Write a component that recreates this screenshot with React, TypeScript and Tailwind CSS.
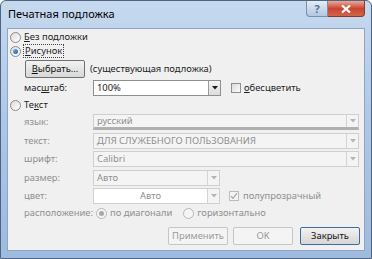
import React from "react";

const font = { fontFamily: '"Noto Sans", "Open Sans", sans-serif' };

const Radio = ({ checked, disabled }: { checked?: boolean; disabled?: boolean }) => (
  <span
    className={`flex h-[11px] w-[11px] shrink-0 items-center justify-center rounded-full border ${
      disabled ? "border-[#b8b8b8] bg-[#f4f4f4]" : "border-[#8a8a8a] bg-gradient-to-br from-[#dcdcdc] to-[#ffffff]"
    }`}
  >
    {checked && (
      <span
        className={`h-[5px] w-[5px] rounded-full ${disabled ? "bg-[#a8a8a8]" : "bg-gradient-to-br from-[#6fb3ec] to-[#1c5fa8]"}`}
      />
    )}
  </span>
);

const Check = ({ checked, disabled }: { checked?: boolean; disabled?: boolean }) => (
  <span
    className={`flex h-[10px] w-[10px] shrink-0 items-center justify-center border ${
      disabled ? "border-[#bcbcbc] bg-[#f4f4f4]" : "border-[#8e8f8f] bg-gradient-to-br from-[#dcdcdc] to-[#fbfbfb]"
    }`}
  >
    {checked && (
      <svg width="8" height="8" viewBox="0 0 8 8">
        <path d="M1 4.2 L3 6.3 L7 1.2" stroke="#a9a9a9" strokeWidth="1.3" fill="none" />
      </svg>
    )}
  </span>
);

const Arrow = ({ disabled }: { disabled?: boolean }) => (
  <span
    className={`flex h-full w-[12px] shrink-0 items-center justify-center border-l ${
      disabled ? "border-[#d4d4d4] bg-[#f4f4f4]" : "border-[#9a9a9a] bg-gradient-to-b from-[#f5f5f5] to-[#dcdcdc]"
    }`}
  >
    <svg width="6" height="4" viewBox="0 0 6 4">
      <path d="M0 0 H6 L3 3.5 Z" fill={disabled ? "#b5b5b5" : "#1a1a1a"} />
    </svg>
  </span>
);

const Combo = ({
  value,
  width,
  disabled,
  center,
  white,
  thick,
}: {
  value: string;
  width: string;
  disabled?: boolean;
  center?: boolean;
  white?: boolean;
  thick?: boolean;
}) => (
  <div
    className={`flex h-[16px] items-stretch border ${width} ${
      disabled ? "border-[#cfcfcf]" : "border-[#8e8f8f]"
    } ${white || !disabled ? "bg-white" : "bg-[#f4f4f4]"} ${thick ? "border-b-[3px] border-b-[#b0b0b0]" : ""}`}
  >
    <span
      className={`flex flex-1 items-center px-[3px] ${center ? "justify-center" : ""} ${
        disabled ? "text-[#8f8f8f]" : "text-[#1e1e1e]"
      }`}
    >
      {value}
    </span>
    <Arrow disabled={disabled} />
  </div>
);

const Label = ({ children }: { children: React.ReactNode }) => (
  <span className="w-[69px] shrink-0 text-[#8f8f8f]">{children}</span>
);

const Btn = ({ children, disabled, def }: { children: React.ReactNode; disabled?: boolean; def?: boolean }) => (
  <button
    className={`flex h-[18px] w-[60px] items-center justify-center rounded-[2px] border ${
      disabled
        ? "border-[#c5c5c5] bg-[#f4f4f4] text-[#9a9a9a]"
        : def
        ? "border-[#3b6e9c] bg-gradient-to-b from-[#f2f2f2] to-[#d6d6d6] text-[#111]"
        : "border-[#707070] bg-gradient-to-b from-[#f2f2f2] to-[#d8d8d8] text-[#111]"
    }`}
  >
    {children}
  </button>
);

export default function App() {
  return (
    <div
      style={font}
      className="flex h-[259px] w-[372px] flex-col rounded-t-[6px] border border-[#4f6480] bg-gradient-to-b from-[#c6d9ef] via-[#abc6e6] to-[#9dbbe0] text-[9.4px] leading-none"
    >
      {/* title bar */}
      <div className="flex h-[27px] items-start">
        <span className="mt-[7px] pl-[7px] text-[11px] text-black">Печатная подложка</span>
        <div className="ml-auto mr-[6px] flex">
          <span className="flex h-[16px] w-[22px] items-center justify-center rounded-bl-[4px] border border-t-0 border-[#7a8fac] bg-gradient-to-b from-[#e4ecf6] to-[#b3c7e0] text-[11px] font-bold text-[#5a6f8c]">
            ?
          </span>
          <span className="flex h-[16px] w-[37px] items-center justify-center rounded-br-[4px] border border-l-0 border-t-0 border-[#8a3a2c] bg-gradient-to-b from-[#e9a89a] via-[#c9452f] to-[#d4634a]">
            <svg width="10" height="8" viewBox="0 0 10 8">
              <path d="M1 0.5 L9 7.5 M9 0.5 L1 7.5" stroke="#ffffff" strokeWidth="2.2" />
            </svg>
          </span>
        </div>
      </div>

      {/* client area */}
      <div className="mx-[6px] flex h-[223px] flex-col border border-[#8da5c2] bg-[#f0f0f0] text-[#1e1e1e]">
        <div className="mt-[2px] flex h-[12px] items-center gap-[3px] pl-[2px]">
          <Radio />
          <span>
            <u>Б</u>ез подложки
          </span>
        </div>
        <div className="mt-[1px] flex h-[14px] items-center gap-[2px] pl-[2px]">
          <Radio checked />
          <span className="border border-dotted border-[#444] px-[1px] py-[1px]">
            <u>Р</u>исунок
          </span>
        </div>
        <div className="mt-[2px] flex h-[17px] items-center pl-[17px]">
          <Btn>
            <span>
              <u>В</u>ыбрать...
            </span>
          </Btn>
          <span className="ml-[5px]">(существующая подложка)</span>
        </div>
        <div className="mt-[3px] flex h-[16px] items-center pl-[16px]">
          <span className="w-[69px] shrink-0">
            мас<u>ш</u>таб:
          </span>
          <Combo value="100%" width="w-[128px]" />
          <span className="ml-[10px] flex items-center gap-[3px]">
            <Check />
            <span>
              <u>о</u>бесцветить
            </span>
          </span>
        </div>
        <div className="mt-[3px] flex h-[12px] items-center gap-[3px] pl-[2px]">
          <Radio />
          <span>
            Те<u>к</u>ст
          </span>
        </div>
        <div className="mt-[3px] flex h-[16px] items-center pl-[16px]">
          <Label>язык:</Label>
          <Combo value="русский" width="w-[266px]" disabled thick />
        </div>
        <div className="mt-[3px] flex h-[16px] items-center pl-[16px]">
          <Label>текст:</Label>
          <Combo value="ДЛЯ СЛУЖЕБНОГО ПОЛЬЗОВАНИЯ" width="w-[266px]" disabled />
        </div>
        <div className="mt-[2px] flex h-[16px] items-center pl-[16px]">
          <Label>шрифт:</Label>
          <Combo value="Calibri" width="w-[266px]" disabled />
        </div>
        <div className="mt-[3px] flex h-[16px] items-center pl-[16px]">
          <Label>размер:</Label>
          <Combo value="Авто" width="w-[127px]" disabled />
        </div>
        <div className="mt-[2px] flex h-[16px] items-center pl-[16px]">
          <Label>цвет:</Label>
          <Combo value="Авто" width="w-[127px]" disabled white center />
          <span className="ml-[9px] flex items-center gap-[4px] text-[#8f8f8f]">
            <Check checked disabled />
            полупрозрачный
          </span>
        </div>
        <div className="mt-[3px] flex h-[12px] items-center pl-[16px] text-[#8f8f8f]">
          <Label>расположение:</Label>
          <span className="ml-[3px] flex items-center gap-[3px]">
            <Radio checked disabled />
            по диагонали
          </span>
          <span className="ml-[11px] flex items-center gap-[3px]">
            <Radio disabled />
            горизонтально
          </span>
        </div>
        <div className="mt-[8px] flex h-[18px] items-center justify-end gap-[5px] pr-[4px]">
          <Btn disabled>Применить</Btn>
          <Btn disabled>OK</Btn>
          <span className="ml-[2px]">
            <Btn def>Закрыть</Btn>
          </span>
        </div>
      </div>
    </div>
  );
}
